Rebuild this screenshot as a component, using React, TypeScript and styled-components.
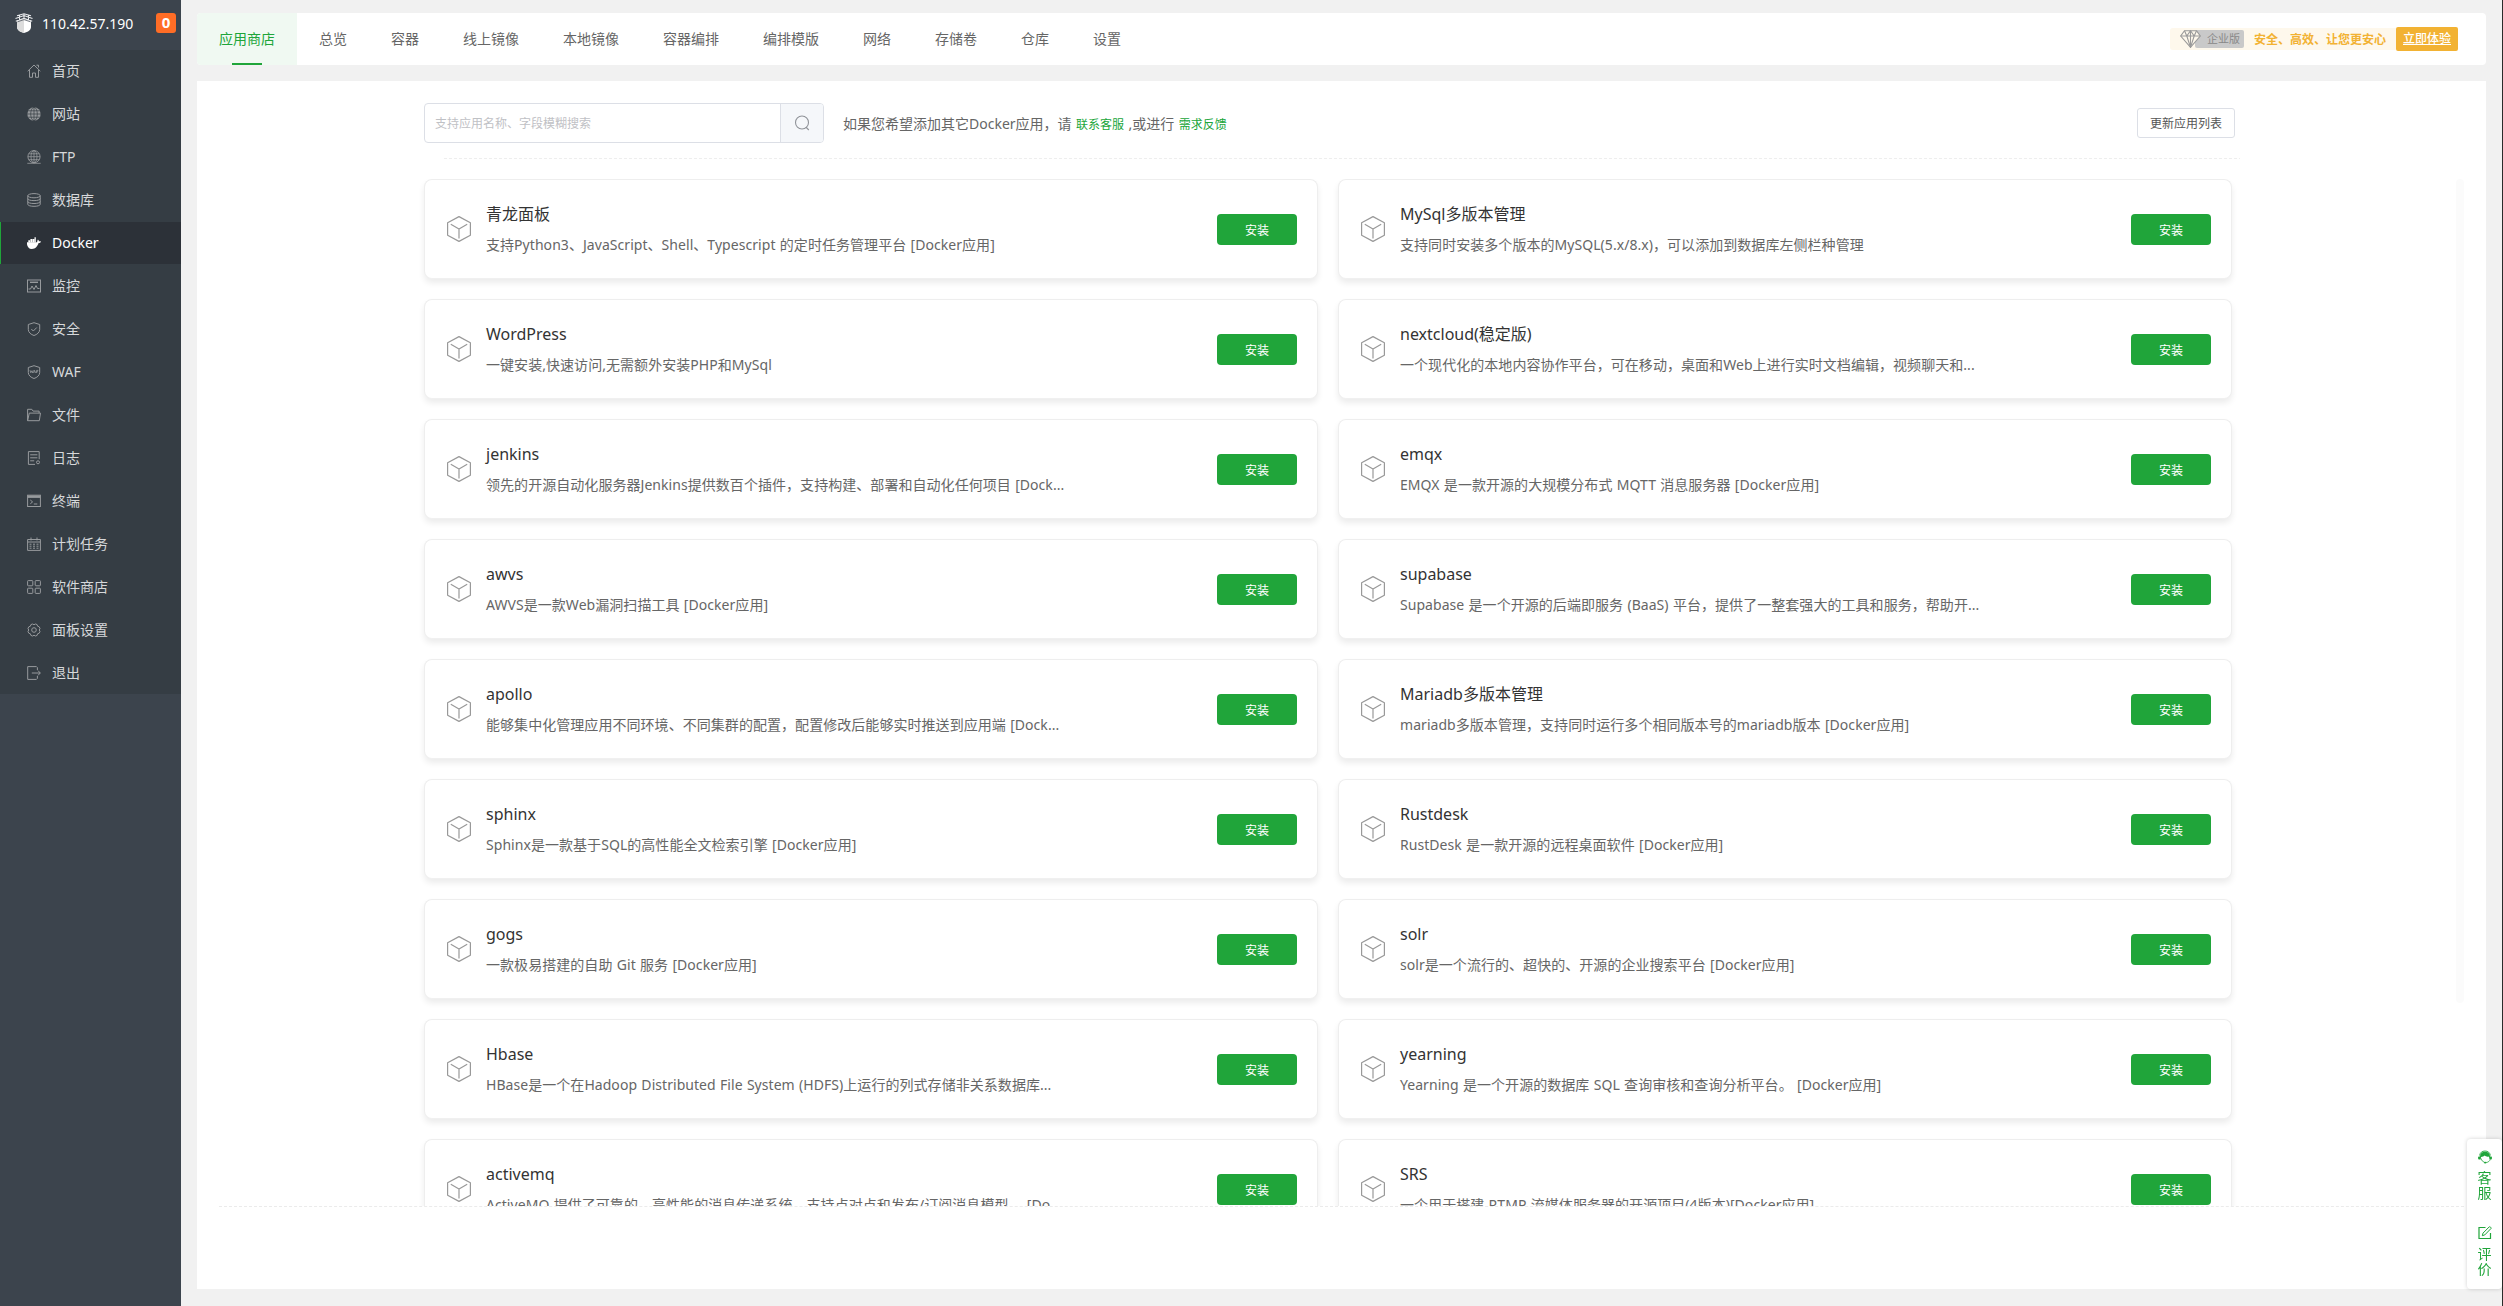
import type { ReactNode } from 'react';
import styled, { createGlobalStyle, css } from 'styled-components';

const colors = {
  green: '#20a53a',
  orange: '#f2b233',
  border: '#dcdfe6',
  line: '#eeeeee',
  text1: '#333333',
  text2: '#666666',
};

const GlobalStyle = createGlobalStyle`
  * {
    box-sizing: border-box;
  }

  body {
    margin: 0;
    background: #f1f1f1;
    color: ${colors.text2};
    font-family: 'Noto Sans', 'Noto Sans CJK SC', sans-serif;
    font-size: 14px;
    overflow: hidden;
  }

  svg {
    display: block;
    flex-shrink: 0;
  }
`;

const Layout = styled.div`
  display: flex;
  height: 1306px;
  border-right: 1px solid #2b2b2b;
`;

/* ---------- sidebar ---------- */

const Sidebar = styled.aside`
  width: 181px;
  flex-shrink: 0;
  background: #3c444d;
`;

const Server = styled.div`
  display: flex;
  align-items: center;
  height: 50px;
  padding: 0 5px 4px 15px;
  color: #fff;

  .ip {
    flex: 1;
    margin-left: 9px;
  }

  .count {
    width: 20px;
    height: 20px;
    border-radius: 3px;
    background: #ff6d26;
    font-size: 15px;
    font-weight: 700;
    line-height: 19px;
    text-align: center;
  }
`;

const Menu = styled.nav`
  display: flex;
  flex-direction: column;
  gap: 1px;
  background: #353d44;
`;

const MenuItem = styled.div<{ $active?: boolean }>`
  display: flex;
  align-items: center;
  gap: 11px;
  height: 42px;
  padding-left: 26px;
  border-left: 1px solid transparent;
  color: #d6d8da;

  svg {
    color: #979a9d;
  }

  span {
    padding-bottom: 2px;
  }

  ${({ $active }) =>
    $active &&
    css`
      border-left-color: ${colors.green};
      background: #2c3138;
      color: #fff;

      svg {
        color: #fff;
      }
    `}
`;

/* ---------- top tabs ---------- */

const Main = styled.main`
  display: flex;
  flex: 1;
  flex-direction: column;
  gap: 16px;
  min-width: 0;
  padding: 13px 16px 17px;
`;

const TabBar = styled.div`
  display: flex;
  align-items: center;
  justify-content: space-between;
  height: 52px;
  padding-right: 28px;
  border-radius: 4px;
  background: #fff;
  overflow: hidden;
`;

const Tabs = styled.div`
  display: flex;
`;

const Tab = styled.div<{ $active?: boolean }>`
  display: flex;
  flex-direction: column;
  align-items: center;
  height: 52px;
  padding: 0 22px;
  line-height: 52px;

  ${({ $active }) =>
    $active &&
    css`
      background: #f0f9f2;
      color: ${colors.green};

      &::after {
        content: '';
        width: 30px;
        height: 2px;
        margin-top: -2px;
        background: ${colors.green};
      }
    `}
`;

const Promo = styled.div`
  display: flex;
  align-items: center;
  font-size: 12px;
  font-weight: 700;

  .plan {
    display: flex;
    align-items: center;
    height: 22px;
    padding: 0 10px;
    border-radius: 3px 0 0 3px;
    background: #fef8ec;
    color: ${colors.orange};
  }

  .edition {
    height: 18px;
    margin: 0 10px 0 -6px;
    padding: 0 4px 0 12px;
    border-radius: 2px;
    background: #c9c9c9;
    color: #888;
    font-size: 11px;
    font-weight: 400;
    line-height: 18px;
  }

  .try {
    width: 62px;
    height: 24px;
    border-radius: 2px;
    background: ${colors.orange};
    color: #fff;
    font-weight: 500;
    line-height: 24px;
    text-align: center;
    text-decoration: underline;
  }
`;

const Diamond = styled.svg`
  position: relative;
  z-index: 1;
`;

/* ---------- content ---------- */

const Panel = styled.section`
  flex: 1;
  min-height: 0;
  padding: 22px 22px 0;
  background: #fff;
`;

const Toolbar = styled.div`
  display: flex;
  align-items: center;
  height: 40px;
  margin: 0 229px 0 205px;
`;

const Search = styled.div`
  display: flex;
  width: 400px;
  height: 40px;
  border: 1px solid ${colors.border};
  border-radius: 4px;
  overflow: hidden;

  .placeholder {
    flex: 1;
    padding-left: 10px;
    color: #bfc1c5;
    font-size: 12px;
    line-height: 40px;
  }

  .button {
    display: flex;
    align-items: center;
    justify-content: center;
    width: 43px;
    padding-right: 1px;
    border-left: 1px solid ${colors.border};
    background: #f5f7fa;
    color: #909399;
  }
`;

const Hint = styled.div`
  flex: 1;
  margin-left: 19px;
  padding-bottom: 1px;
  word-spacing: 0.8px;

  a {
    color: ${colors.green};
    font-size: 12px;
  }
`;

const RefreshButton = styled.button`
  width: 98px;
  height: 30px;
  padding: 1px 0 0;
  border: 1px solid ${colors.border};
  border-radius: 3px;
  background: #fff;
  color: #555;
  font-family: inherit;
  font-size: 12px;
  line-height: 28px;
`;

const Divider = styled.div`
  height: 1px;
  margin: 15px 224px 20px 225px;
  background: repeating-linear-gradient(90deg, ${colors.line} 0 3px, transparent 3px 5px);
`;

const ListViewport = styled.div`
  display: flex;
  justify-content: space-between;
  height: 1028px;
  padding-left: 201px;
  border-bottom: 1px dashed #ebebeb;
  overflow: hidden;
`;

const CardGrid = styled.div`
  display: grid;
  grid-template-columns: repeat(2, 894px);
  grid-auto-rows: 100px;
  gap: 20px;
  padding: 0 4px;
`;

const ScrollThumb = styled.div`
  width: 8px;
  height: 824px;
  border-radius: 4px;
  background: #fbfbfb;
`;

const Card = styled.article`
  display: flex;
  align-items: center;
  padding: 0 20px 0 22px;
  border: 1px solid ${colors.line};
  border-bottom-color: #f0f0f0;
  border-radius: 8px;
  background: #fff;
  box-shadow: 0 4px 6px rgba(0, 0, 0, 0.08);
`;

const CardBody = styled.div`
  flex: 1;
  min-width: 0;
  margin-left: 15px;
  white-space: nowrap;

  .name {
    color: ${colors.text1};
    font-size: 16px;
    line-height: 32px;
  }

  .description {
    letter-spacing: 0.05px;
    line-height: 30px;
    word-spacing: 0.6px;
  }
`;

const InstallButton = styled.button`
  width: 80px;
  height: 31px;
  padding: 1px 0 0;
  border: 0;
  border-radius: 4px;
  background: ${colors.green};
  color: #fff;
  font-family: inherit;
  font-size: 12px;
`;

/* ---------- floating service widget ---------- */

const ServiceDock = styled.div`
  position: fixed;
  right: 1px;
  bottom: 17px;
  display: flex;
  flex-direction: column;
  gap: 25px;
  width: 35px;
  height: 150px;
  padding-top: 11px;
  border-radius: 4px;
  background: #fff;
  box-shadow: 0 0 4px rgba(0, 0, 0, 0.18);
  color: ${colors.green};
`;

const ServiceItem = styled.div`
  display: flex;
  flex-direction: column;
  align-items: center;
  gap: 6px;
  padding-bottom: 1px;

  span {
    width: 14px;
    line-height: 15px;
  }
`;

/* ---------- icons ---------- */

const LineIcon = ({ children }: { children: ReactNode }) => (
  <svg width="14" height="14" viewBox="0 0 14 14" fill="none" stroke="currentColor" strokeWidth="1">
    {children}
  </svg>
);

const LogoIcon = () => (
  <svg width="18" height="20" viewBox="0 0 18 20" fill="none">
    <path d="M2 7.500 9 6l7 1.500V14c0 3-3 5-7 6-4-1-7-3-7-6z" fill="#fff" />
    <path d="M2 7.500 9 6v14c-4-1-7-3-7-6z" fill="#dcdcdc" />
    <path
      d="M.5 5.500 9 2.600l8.500 2.900M2 2.800 9 .8l7 2M.8 8.300 9 5.400l8.200 2.900M4.500 2v6M9 .5v6M13.500 2v6"
      stroke="#e8eaec"
      strokeWidth="1.100"
    />
    <path d="M2.500 7.800 9 5.600l6.500 2.200" transform="translate(0 1)" stroke="#3c444d" strokeWidth=".7" />
  </svg>
);

const CubeIcon = () => (
  <svg width="24" height="26" viewBox="0 0 24 26" fill="none" stroke="#999" strokeWidth="1.200" strokeLinejoin="round">
    <path d="M12 .6 23.400 6.800v12.400L12 25.400.6 19.200V6.800z" />
    <path d="M3.800 8.300 12 13l8.200-4.700M12 13v9.500" />
  </svg>
);

const SearchIcon = () => (
  <svg width="16" height="16" viewBox="0 0 16 16" fill="none" stroke="currentColor" strokeWidth="1.100">
    <circle cx="8" cy="7.500" r="6.500" />
    <path d="m11.800 12 3 3" />
  </svg>
);

const HeadsetIcon = () => (
  <svg width="14" height="14" viewBox="0 0 14 14" fill="none">
    <path d="M1.600 5.500a5.500 5.500 0 0 1 10.800 0" stroke="currentColor" strokeWidth=".9" />
    <path
      d="M2 6.500C2 3.500 4 1.800 7 1.800s5 1.700 5 4.700h1.400c.8.600.8 2.200 0 3H11.500L11 6.500C9 7 7.500 6.300 6.800 5.500 6 6.500 4.300 6.700 3 7l-.3 2.500H.7c-.9-.8-.9-2.400 0-3z"
      fill="currentColor"
    />
    <path d="M3.200 8.500c.3 2 1.500 3.200 3 3.500M12.200 9.500c-.5 1.600-2 2.800-4 3" stroke="currentColor" strokeWidth=".8" />
    <ellipse cx="7.200" cy="12.600" rx="1.300" ry=".9" fill="currentColor" />
  </svg>
);

const EditIcon = () => (
  <LineIcon>
    <path d="M7.500 1.500H1v11h11.500V7" strokeWidth="1.200" />
    <path d="m4.300 9.700.7-2.600 6.300-6.300c.6-.5 2.300 1.100 1.700 1.700L6.800 8.900z" />
  </LineIcon>
);

const menuIcons: Record<string, ReactNode> = {
  home: (
    <LineIcon>
      <path d="M.7 7.200 7 1l6.300 6.200M2.500 6v7.300h3V9h3v4.300h3V6M9.500 1.200h2v2.300" />
    </LineIcon>
  ),
  site: (
    <svg width="14" height="14" viewBox="0 0 14 14">
      <circle cx="7" cy="7" r="6.700" fill="currentColor" />
      <g fill="none" stroke="#353d44" strokeWidth=".7">
        <path d="M0 7h14M1.200 3.800h11.600M1.200 10.200h11.600M7 0v14" />
        <ellipse cx="7" cy="7" rx="3.300" ry="6.700" />
      </g>
    </svg>
  ),
  ftp: (
    <LineIcon>
      <circle cx="7" cy="6.700" r="6.100" strokeWidth=".9" />
      <path d="M.9 6.700h12.200M1.800 3.800h10.400M1.800 9.700h10.400M7 .6v12.200M.3 13.300h13.400" strokeWidth=".8" />
      <ellipse cx="7" cy="6.700" rx="3" ry="6.100" strokeWidth=".8" />
    </LineIcon>
  ),
  database: (
    <LineIcon>
      <ellipse cx="7" cy="2.700" rx="6.200" ry="2.100" />
      <path d="M.8 2.700v8.600c0 2.700 12.400 2.700 12.400 0V2.700M.8 5.600c0 2.700 12.400 2.700 12.400 0M.8 8.500c0 2.700 12.400 2.700 12.400 0" />
    </LineIcon>
  ),
  docker: (
    <svg width="14" height="14" viewBox="0 0 14 14" fill="currentColor">
      <path d="M0 6.200h10c.5-.5.200-1.700.9-2.600.7.500 1 1.100 1 1.700.7-.1 1.400 0 2.100.3-.4 1-1.200 1.500-2.400 1.500C10.500 10.500 8.500 13 4.800 13 1.200 13-.4 9.700 0 6.200z" />
      <path d="M1.300 4.200h1.800V6.500H1.300zM3.400 3h1.800v3.500H3.400zM5.500 3h1.800v3.500H5.500zM7.500 1.200h1.300V6.500H7.500z" />
    </svg>
  ),
  monitor: (
    <LineIcon>
      <rect x=".5" y="1" width="13" height="12" />
      <path d="M3 3.300h8" strokeWidth="1.400" />
      <path d="M1.500 10h2l1.500-3 2 3.500 2-4 1.500 3h2" />
    </LineIcon>
  ),
  security: (
    <LineIcon>
      <path d="M7 .7 12.700 2.500v5c0 3-2.700 5-5.700 6-3-1-5.700-3-5.700-6v-5z" />
      <path d="m4.300 7 2 2 3.500-3.500" />
    </LineIcon>
  ),
  waf: (
    <LineIcon>
      <path d="M7 .7 12.700 2.500v5c0 3-2.700 5-5.700 6-3-1-5.700-3-5.700-6v-5z" />
      <path d="m3 5.200.8 2.600.9-2 .9 2 .7-2.600M6.600 8l1-2.700L8.500 8M9.600 8V5.400h1.700M9.600 6.700h1.300" strokeWidth=".8" />
    </LineIcon>
  ),
  files: (
    <LineIcon>
      <path d="M.6 12.700V1.300h4.200l1.300 1.800h6v2M.6 12.700 2.300 5.100h11.200l-1.200 7.600z" />
    </LineIcon>
  ),
  logs: (
    <LineIcon>
      <path d="M8 13.400H1.400V.6h10.800v7.600M3.200 3.800h7.200M3.200 6.800h7.200M3.200 9.800h4" />
      <circle cx="11" cy="11.300" r="1.500" />
    </LineIcon>
  ),
  terminal: (
    <LineIcon>
      <rect x=".6" y="1.200" width="12.800" height="11.300" />
      <path d="M.6 2.700h12.800" strokeWidth="2.400" />
      <path d="m3.300 6 2.300 1.900-2.300 1.900M6.800 10h3.500" />
    </LineIcon>
  ),
  cron: (
    <LineIcon>
      <path d="M.6 2.500h12.800v10.900H.6zM.6 5h12.800M4 .5v3M10 .5v3M2.500 7.200h2M6 7.200h2M9.500 7.200h2M2.500 9.200h2M6 9.200h2M9.500 9.200h2M2.500 11.200h2M6 11.200h2M9.500 11.200h2" />
    </LineIcon>
  ),
  store: (
    <LineIcon>
      <rect x=".6" y=".6" width="5.200" height="5.200" rx=".7" />
      <rect x="8.200" y=".6" width="5.200" height="5.200" rx=".7" />
      <rect x=".6" y="8.200" width="5.200" height="5.200" rx=".7" />
      <rect x="8.200" y="8.200" width="5.200" height="5.200" rx=".7" />
    </LineIcon>
  ),
  settings: (
    <LineIcon>
      <path d="m5.500 1 1.500.7L8.500 1l1.600.6.500 1.600 1.600.6.800 1.600-.7 1.600.7 1.600-.8 1.600-1.600.6-.5 1.600-1.600.6L7 12.300 5.500 13l-1.600-.6-.5-1.600-1.600-.6L1 8.600 1.700 7 1 5.400l.8-1.600 1.600-.6.500-1.600z" />
      <circle cx="7" cy="7" r="2.300" />
    </LineIcon>
  ),
  logout: (
    <LineIcon>
      <path d="M10.400 4V1.600l-1-1H.7v12.800h8.700l1-1V10M4.800 7h8.400M11 4.600 13.300 7 11 9.400" />
    </LineIcon>
  ),
};

/* ---------- data ---------- */

const menu = [
  { icon: 'home', label: '首页' },
  { icon: 'site', label: '网站' },
  { icon: 'ftp', label: 'FTP' },
  { icon: 'database', label: '数据库' },
  { icon: 'docker', label: 'Docker' },
  { icon: 'monitor', label: '监控' },
  { icon: 'security', label: '安全' },
  { icon: 'waf', label: 'WAF' },
  { icon: 'files', label: '文件' },
  { icon: 'logs', label: '日志' },
  { icon: 'terminal', label: '终端' },
  { icon: 'cron', label: '计划任务' },
  { icon: 'store', label: '软件商店' },
  { icon: 'settings', label: '面板设置' },
  { icon: 'logout', label: '退出' },
];

const tabs = [
  '应用商店',
  '总览',
  '容器',
  '线上镜像',
  '本地镜像',
  '容器编排',
  '编排模版',
  '网络',
  '存储卷',
  '仓库',
  '设置',
];

const apps = [
  { name: '青龙面板', description: '支持Python3、JavaScript、Shell、Typescript 的定时任务管理平台 [Docker应用]' },
  { name: 'MySql多版本管理', description: '支持同时安装多个版本的MySQL(5.x/8.x)，可以添加到数据库左侧栏种管理' },
  { name: 'WordPress', description: '一键安装,快速访问,无需额外安装PHP和MySql' },
  {
    name: 'nextcloud(稳定版)',
    description: '一个现代化的本地内容协作平台，可在移动，桌面和Web上进行实时文档编辑，视频聊天和...',
  },
  { name: 'jenkins', description: '领先的开源自动化服务器Jenkins提供数百个插件，支持构建、部署和自动化任何项目 [Dock...' },
  { name: 'emqx', description: 'EMQX 是一款开源的大规模分布式 MQTT 消息服务器 [Docker应用]' },
  { name: 'awvs', description: 'AWVS是一款Web漏洞扫描工具 [Docker应用]' },
  { name: 'supabase', description: 'Supabase 是一个开源的后端即服务 (BaaS) 平台，提供了一整套强大的工具和服务，帮助开...' },
  { name: 'apollo', description: '能够集中化管理应用不同环境、不同集群的配置，配置修改后能够实时推送到应用端 [Dock...' },
  { name: 'Mariadb多版本管理', description: 'mariadb多版本管理，支持同时运行多个相同版本号的mariadb版本 [Docker应用]' },
  { name: 'sphinx', description: 'Sphinx是一款基于SQL的高性能全文检索引擎 [Docker应用]' },
  { name: 'Rustdesk', description: 'RustDesk 是一款开源的远程桌面软件 [Docker应用]' },
  { name: 'gogs', description: '一款极易搭建的自助 Git 服务 [Docker应用]' },
  { name: 'solr', description: 'solr是一个流行的、超快的、开源的企业搜索平台 [Docker应用]' },
  { name: 'Hbase', description: 'HBase是一个在Hadoop Distributed File System (HDFS)上运行的列式存储非关系数据库...' },
  { name: 'yearning', description: 'Yearning 是一个开源的数据库 SQL 查询审核和查询分析平台。 [Docker应用]' },
  { name: 'activemq', description: 'ActiveMQ 提供了可靠的、高性能的消息传递系统，支持点对点和发布/订阅消息模型。 [Do...' },
  { name: 'SRS', description: '一个用于搭建 RTMP 流媒体服务器的开源项目(4版本)[Docker应用]' },
];

const App = () => {
  return (
    <>
      <GlobalStyle />
      <Layout>
        <Sidebar>
          <Server>
            <LogoIcon />
            <span className="ip">110.42.57.190</span>
            <span className="count">0</span>
          </Server>
          <Menu>
            {menu.map(({ icon, label }) => (
              <MenuItem key={icon} $active={icon === 'docker'}>
                {menuIcons[icon]}
                <span>{label}</span>
              </MenuItem>
            ))}
          </Menu>
        </Sidebar>

        <Main>
          <TabBar>
            <Tabs>
              {tabs.map((tab, index) => (
                <Tab key={tab} $active={index === 0}>
                  {tab}
                </Tab>
              ))}
            </Tabs>
            <Promo>
              <div className="plan">
                <Diamond width="21" height="18" viewBox="0 0 21 18" fill="#fef8ec" stroke="#999" strokeWidth="1.100">
                  <path d="M4.500.7h12l3.800 5.300-9.800 11.300L.7 6z" />
                  <path
                    d="M.7 6h19.600M4.500.7 6.800 6l3.700 11.300L14.200 6l2.300-5.300M6.800 6l3.700-5.300L14.200 6M10.500.7v16"
                    fill="none"
                  />
                </Diamond>
                <span className="edition">企业版</span>
                <span>安全、高效、让您更安心</span>
              </div>
              <div className="try">立即体验</div>
            </Promo>
          </TabBar>

          <Panel>
            <Toolbar>
              <Search>
                <div className="placeholder">支持应用名称、字段模糊搜索</div>
                <div className="button">
                  <SearchIcon />
                </div>
              </Search>
              <Hint>
                如果您希望添加其它Docker应用，请 <a>联系客服</a> ,或进行 <a>需求反馈</a>
              </Hint>
              <RefreshButton>更新应用列表</RefreshButton>
            </Toolbar>
            <Divider />
            <ListViewport>
              <CardGrid>
                {apps.map(({ name, description }) => (
                  <Card key={name}>
                    <CubeIcon />
                    <CardBody>
                      <div className="name">{name}</div>
                      <div className="description">{description}</div>
                    </CardBody>
                    <InstallButton>安装</InstallButton>
                  </Card>
                ))}
              </CardGrid>
              <ScrollThumb />
            </ListViewport>
          </Panel>
        </Main>

        <ServiceDock>
          <ServiceItem>
            <HeadsetIcon />
            <span>客服</span>
          </ServiceItem>
          <ServiceItem>
            <EditIcon />
            <span>评价</span>
          </ServiceItem>
        </ServiceDock>
      </Layout>
    </>
  );
};

export default App;
